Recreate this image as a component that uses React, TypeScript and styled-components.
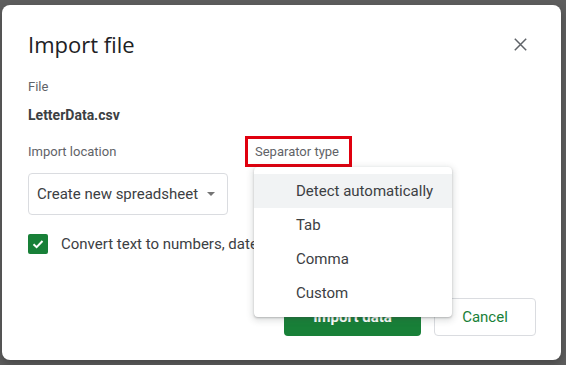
import React, { FC } from 'react'
import styled, { createGlobalStyle } from 'styled-components'

const GlobalStyle = createGlobalStyle`
  html, body {
    margin: 0;
    padding: 0;
    background: #5e5e5e;
    font-family: Roboto, 'Liberation Sans', sans-serif;
    color: #3c4043;
  }
  * { box-sizing: border-box; }
`

const Backdrop = styled.div({
  width: '566px',
  height: '365px',
  padding: '5px 0 0 2px',
  overflow: 'hidden',
})

const Dialog = styled.div({
  position: 'relative',
  display: 'flex',
  flexDirection: 'column',
  width: '559px',
  height: '355px',
  padding: '25px 25px 24px 26px',
  background: '#fff',
  borderRadius: '8px',
  boxShadow: '0 4px 10px rgba(0, 0, 0, 0.25)',
})

const Header = styled.div({
  display: 'flex',
  justifyContent: 'space-between',
  alignItems: 'center',
  height: '28px',
})

const Title = styled.h1({
  margin: 0,
  fontFamily: "'Open Sans', Roboto, sans-serif",
  fontSize: '22px',
  fontWeight: 400,
  lineHeight: '28px',
  color: '#202124',
})

const CloseButton = styled.button({
  display: 'flex',
  alignItems: 'center',
  justifyContent: 'center',
  width: '24px',
  height: '24px',
  marginRight: '4px',
  padding: 0,
  border: 'none',
  background: 'transparent',
  color: '#5f6368',
})

const SmallLabel = styled.div({
  fontSize: '13px',
  lineHeight: '20px',
  color: '#5f6368',
})

const FileLabel = styled(SmallLabel)({
  marginTop: '19px',
})

const FileName = styled.div({
  marginTop: '8px',
  fontSize: '14px',
  fontWeight: 700,
  lineHeight: '20px',
  color: '#3c4043',
})

const FieldRow = styled.div({
  display: 'flex',
  gap: '17px',
  marginTop: '11px',
})

const Field = styled.div<{ width?: number }>(({ width }) => ({
  position: 'relative',
  display: 'flex',
  flexDirection: 'column',
  alignItems: 'flex-start',
  width: width ? `${width}px` : 'auto',
}))

const FieldLabel = styled(SmallLabel)({
  display: 'flex',
  alignItems: 'center',
  height: '31px',
})

const MarkedLabel = styled(FieldLabel)({
  padding: '0 10px 0 7px',
  border: '3px solid #e0000e',
})

const SelectBox = styled.div({
  display: 'flex',
  alignItems: 'center',
  gap: '9px',
  width: '200px',
  height: '42px',
  marginTop: '6px',
  padding: '0 0 0 8px',
  border: '1px solid #dadce0',
  borderRadius: '4px',
  fontSize: '15px',
  color: '#3c4043',
})

const Caret = styled.span({
  width: 0,
  height: 0,
  borderLeft: '4px solid transparent',
  borderRight: '4px solid transparent',
  borderTop: '4px solid #757575',
})

const CheckRow = styled.div({
  display: 'flex',
  alignItems: 'center',
  gap: '13px',
  marginTop: '19px',
  fontSize: '15px',
  color: '#3c4043',
  whiteSpace: 'nowrap',
})

const CheckBox = styled.span({
  display: 'flex',
  alignItems: 'center',
  justifyContent: 'center',
  width: '20px',
  height: '20px',
  borderRadius: '2px',
  background: '#188038',
})

const Footer = styled.div({
  display: 'flex',
  justifyContent: 'flex-end',
  gap: '13px',
  marginTop: 'auto',
})

const Button = styled.button<{ primary?: boolean; width: number }>(({ primary, width }) => ({
  width: `${width}px`,
  height: '38px',
  padding: 0,
  borderRadius: '4px',
  border: primary ? 'none' : '1px solid #dadce0',
  background: primary ? '#188038' : '#fff',
  color: primary ? '#fff' : '#188038',
  fontFamily: 'Roboto, sans-serif',
  fontSize: '15px',
  fontWeight: primary ? 700 : 400,
}))

const Menu = styled.ul({
  position: 'absolute',
  top: '31px',
  left: '9px',
  zIndex: 2,
  width: '198px',
  margin: 0,
  padding: '7px 0',
  listStyle: 'none',
  background: '#fff',
  borderRadius: '4px',
  boxShadow: '0 1px 2px rgba(60, 64, 67, 0.3), 0 2px 6px 2px rgba(60, 64, 67, 0.15)',
})

const MenuItem = styled.li<{ active?: boolean }>(({ active }) => ({
  height: '34px',
  display: 'flex',
  alignItems: 'center',
  paddingLeft: '42px',
  fontSize: '15px',
  color: '#3c4043',
  background: active ? '#f1f3f4' : 'transparent',
}))

const separators = ['Detect automatically', 'Tab', 'Comma', 'Custom']

const App: FC = () => (
  <Backdrop>
    <GlobalStyle />
    <Dialog>
      <Header>
        <Title>Import file</Title>
        <CloseButton aria-label="Close">
          <svg width="13" height="13" viewBox="0 0 13 13">
            <path d="M0.8 0.8L12.2 12.2M12.2 0.8L0.8 12.2" stroke="currentColor" strokeWidth="1.5" />
          </svg>
        </CloseButton>
      </Header>

      <FileLabel>File</FileLabel>
      <FileName>LetterData.csv</FileName>

      <FieldRow>
        <Field width={200}>
          <FieldLabel>Import location</FieldLabel>
          <SelectBox>
            Create new spreadsheet
            <Caret />
          </SelectBox>
        </Field>

        <Field>
          <MarkedLabel>Separator type</MarkedLabel>
          <Menu>
            {separators.map((s, i) => (
              <MenuItem key={s} active={i === 0}>
                {s}
              </MenuItem>
            ))}
          </Menu>
        </Field>
      </FieldRow>

      <CheckRow>
        <CheckBox>
          <svg width="14" height="14" viewBox="0 0 14 14">
            <path d="M2.5 7.2L5.6 10.2L11.5 4" fill="none" stroke="#fff" strokeWidth="2" />
          </svg>
        </CheckBox>
        Convert text to numbers, dates, and formulas
      </CheckRow>

      <Footer>
        <Button primary width={137}>Import data</Button>
        <Button width={102}>Cancel</Button>
      </Footer>
    </Dialog>
  </Backdrop>
)

export default App
